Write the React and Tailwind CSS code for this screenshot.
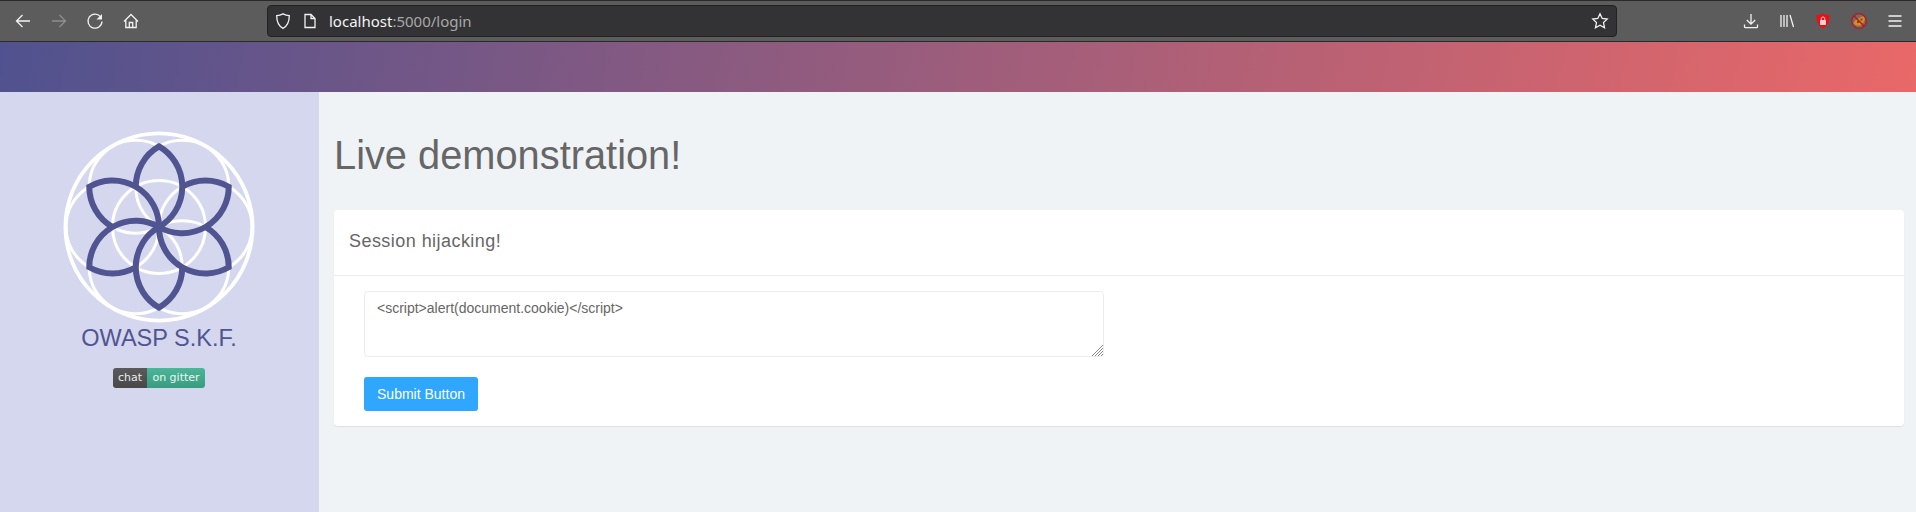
function Logo() {
  const centers = [[0,0],[46.500,0],[-46.500,0],[23.250,40.270],[-23.250,40.270],[23.250,-40.270],[-23.250,-40.270]];
  const petal = "M0 0 A46.500 46.500 0 0 0 0 -80.540 A46.500 46.500 0 0 0 -23.250 -40.270";
  return (
    <svg width="192" height="192" viewBox="-96 -96 192 192" fill="none">
      <circle cx="0" cy="0" r="93.600" stroke="#fff" strokeWidth="3.800" />
      {centers.map(([x, y], i) => (
        <circle key={i} cx={x} cy={y} r="46.500" stroke="#fff" strokeWidth="3" />
      ))}
      {[0, 60, 120, 180, 240, 300].map((a) => (
        <path key={a} d={petal} transform={`rotate(${a})`} stroke="#505592" strokeWidth="6" strokeLinejoin="miter" strokeMiterlimit="6" />
      ))}
    </svg>
  );
}

function Icon({ children, className = "" }) {
  return (
    <svg width="18" height="18" viewBox="0 0 18 18" fill="none" stroke="currentColor" strokeWidth="1.300" className={className}>
      {children}
    </svg>
  );
}

function Toolbar() {
  return (
    <div className="flex h-[42px] items-center border-y border-y-[#2a2a2a] bg-[#5c5c5c] text-[#f2f2f2]">
      <div className="flex items-center gap-[18px] pl-[14px]">
        <Icon><path d="M16 9H2.500M8.500 3 2.500 9l6 6" /></Icon>
        <Icon className="text-[#8e8e8e]"><path d="M2 9h13.500M9.500 3l6 6-6 6" /></Icon>
        <Icon><path d="M14.400 4.700A7 7 0 1 0 16 9.500" /><path d="M16 2v5.500h-5.500Z" fill="currentColor" stroke="none" /></Icon>
        <Icon><path d="M2 9.500 9 2.500l7 7M3.800 8v7.500h10.400V8M7.300 15.500V10.500h3.400v5" /></Icon>
      </div>
      <div className="ml-[127px] flex h-[32px] w-[1350px] items-center rounded border border-[#222] bg-[#333335] pl-[6px] pr-[7px]">
        <Icon><path d="M9 1.800c2 1 4.200 1.600 6.300 1.800 0 6-1.500 10.400-6.300 12.800C4.200 14 2.700 9.600 2.700 3.600 4.800 3.400 7 2.800 9 1.800Z" /></Icon>
        <Icon className="ml-[9px]"><path d="M4 2.500h6l4 4v9H4ZM10 2.500v4h4" /></Icon>
        <span className="ml-[10px] font-['Noto_Sans',sans-serif] text-[15px] text-[#f4f4f4]">localhost<span className="text-[#a8a8a8]">:5000/login</span></span>
        <Icon className="ml-auto"><path d="m9 1.800 2.200 4.700 5 .6-3.700 3.500 1 5.100L9 13.200l-4.500 2.500 1-5.100L1.800 7.100l5-.6Z" /></Icon>
      </div>
      <div className="ml-auto flex items-center gap-[18px] pr-[12px]">
        <Icon><path d="M9 2v10M4.800 8 9 12.200 13.200 8M2.500 12.500v2.200c0 .6.500 1 1 1h11c.5 0 1-.4 1-1v-2.200" /></Icon>
        <Icon><path d="M3 3v12M6 3v12M9 3v12M12 3l3.500 12" /></Icon>
        <svg width="18" height="18" viewBox="0 0 18 18">
          <path d="M9 1.500c2 1 4 1.500 6.500 1.700 0 6.300-1.700 10.800-6.500 13.300-4.800-2.500-6.500-7-6.500-13.300C5 3 7 2.500 9 1.500Z" fill="#ee0d14" />
          <rect x="6" y="8" width="6" height="5" rx="0.800" fill="#ffd5d5" />
          <path d="M7.200 8V6.800a1.800 1.800 0 0 1 3.600 0V8" fill="none" stroke="#ffd5d5" strokeWidth="1" />
        </svg>
        <svg width="18" height="18" viewBox="0 0 18 18">
          <circle cx="9" cy="9" r="7.500" fill="#7a6a66" />
          <path d="M3.500 11c1-3 3.500-3.500 5-4.500S12 3.500 14.500 5c1 2.500-.5 5.500-2.500 7.500-3 2-6.500 1.500-8.500-1.500Z" fill="#d98a28" />
          <path d="M7 9h2v2H7zM10.500 6.500h2v2h-2z" fill="#7a4a14" />
          <circle cx="9" cy="9" r="7.300" fill="none" stroke="#b5161c" strokeWidth="1.300" />
          <path d="m3.800 3.800 10.400 10.400" stroke="#b5161c" strokeWidth="1.300" />
        </svg>
        <Icon><path d="M2.500 4h13M2.500 9h13M2.500 14h13" /></Icon>
      </div>
    </div>
  );
}

export default function App() {
  return (
    <div className="flex h-[512px] w-[1916px] flex-col overflow-hidden bg-[#f0f3f6] font-['Liberation_Sans',sans-serif] text-[#666]">
      <Toolbar />
      <div className="h-[50px] bg-[linear-gradient(100deg,#50528f_0%,#e96868_100%)]" />
      <div className="flex flex-1">
        <aside className="flex w-[319px] flex-col items-center bg-[#d5d7ee] pr-[1px] pt-[39px]">
          <Logo />
          <div className="text-[23.500px] leading-[30px] text-[#505592]">OWASP S.K.F.</div>
          <div className="mt-[15px] flex h-[20px] overflow-hidden rounded-[3px] font-['DejaVu_Sans',sans-serif] text-[11px] leading-[20px] text-white/90">
            <span className="w-[34px] bg-[linear-gradient(#5a5a5a,#484848)] text-center">chat</span>
            <span className="w-[58px] bg-[linear-gradient(#4cb698,#399c7f)] text-center">on gitter</span>
          </div>
        </aside>
        <main className="flex-1 pl-[15px] pr-[12px]">
          <h1 className="mb-[30px] mt-[38px] text-[39.800px] font-light leading-[50px]">Live demonstration!</h1>
          <section className="rounded-[4px] bg-white shadow-[0_1px_1px_rgba(0,0,0,0.08)]">
            <div className="flex h-[66px] items-center border-b border-[#ececec] px-[15px] pb-[2px] text-[18px] tracking-[0.45px]">Session hijacking!</div>
            <div className="px-[30px] py-[15px]">
              <div className="relative w-[740px]">
                <textarea
                  readOnly
                  defaultValue="<script>alert(document.cookie)</script>"
                  className="block h-[66px] w-full resize-none rounded-[4px] border border-[#ececec] px-[12px] py-[6px] text-[14px] leading-[20px] text-[#666] outline-none"
                />
                <svg width="11" height="11" viewBox="0 0 11 11" stroke="#8a8a8a" strokeWidth="1" className="absolute bottom-[1px] right-[1px]">
                  <path d="M0 11 11 0M3 11l8-8M6 11l5-5M9 11l2-2" />
                </svg>
              </div>
              <button className="mt-[20px] block h-[34px] w-[114px] rounded-[3px] bg-[#2fa6ff] text-[14px] text-white">Submit Button</button>
            </div>
          </section>
        </main>
      </div>
    </div>
  );
}
